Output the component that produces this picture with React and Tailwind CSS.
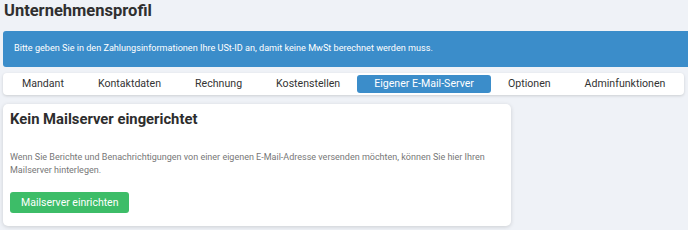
export default function App() {
  const tabs = ["Mandant", "Kontaktdaten", "Rechnung", "Kostenstellen", "Eigener E-Mail-Server", "Optionen", "Adminfunktionen"];
  return (
    <div className="w-[688px] h-[230px] overflow-hidden bg-[#eff2f7] pl-[3px]" style={{ fontFamily: "Roboto, 'Liberation Sans', sans-serif" }}>
      <h1 className="text-[16.5px] leading-[22px] font-bold text-[#2f2f2f] pl-[1px]">Unternehmensprofil</h1>
      <div className="mt-[9px] h-[36px] bg-[#3b8dca] rounded-l-[3px] flex items-center pl-[11px] text-white text-[9.1px] whitespace-nowrap">
        Bitte geben Sie in den Zahlungsinformationen Ihre USt-ID an, damit keine MwSt berechnet werden muss.
      </div>
      <div className="mt-[6px] inline-flex items-center h-[22px] p-[2px] bg-white rounded-[4px] shadow-[0_1px_3px_rgba(0,0,0,0.15)] whitespace-nowrap">
        {tabs.map((t) => (
          <div
            key={t}
            className={
              t === "Eigener E-Mail-Server"
                ? "h-[18px] flex items-center px-[17px] rounded-[3px] bg-[#3b8dca] text-white text-[10.6px]"
                : "h-[18px] flex items-center px-[17px] text-[#333] text-[10.6px]"
            }
          >
            {t}
          </div>
        ))}
      </div>
      <div className="mt-[9px] w-[508px] h-[122px] bg-white rounded-[5px] shadow-[0_1px_4px_rgba(0,0,0,0.15)] px-[7px] pt-[5px]">
        <h2 className="text-[14.8px] leading-[20px] font-bold text-[#2d2d2d]">Kein Mailserver eingerichtet</h2>
        <p className="mt-[22px] text-[9px] leading-[13px] text-[#777]">
          Wenn Sie Berichte und Benachrichtigungen von einer eigenen E-Mail-Adresse versenden möchten, können Sie hier Ihren Mailserver hinterlegen.
        </p>
        <button className="mt-[15px] h-[21px] px-[11px] rounded-[3px] bg-[#3dbd68] text-white text-[10.5px] leading-[21px] whitespace-nowrap">
          Mailserver einrichten
        </button>
      </div>
    </div>
  );
}
